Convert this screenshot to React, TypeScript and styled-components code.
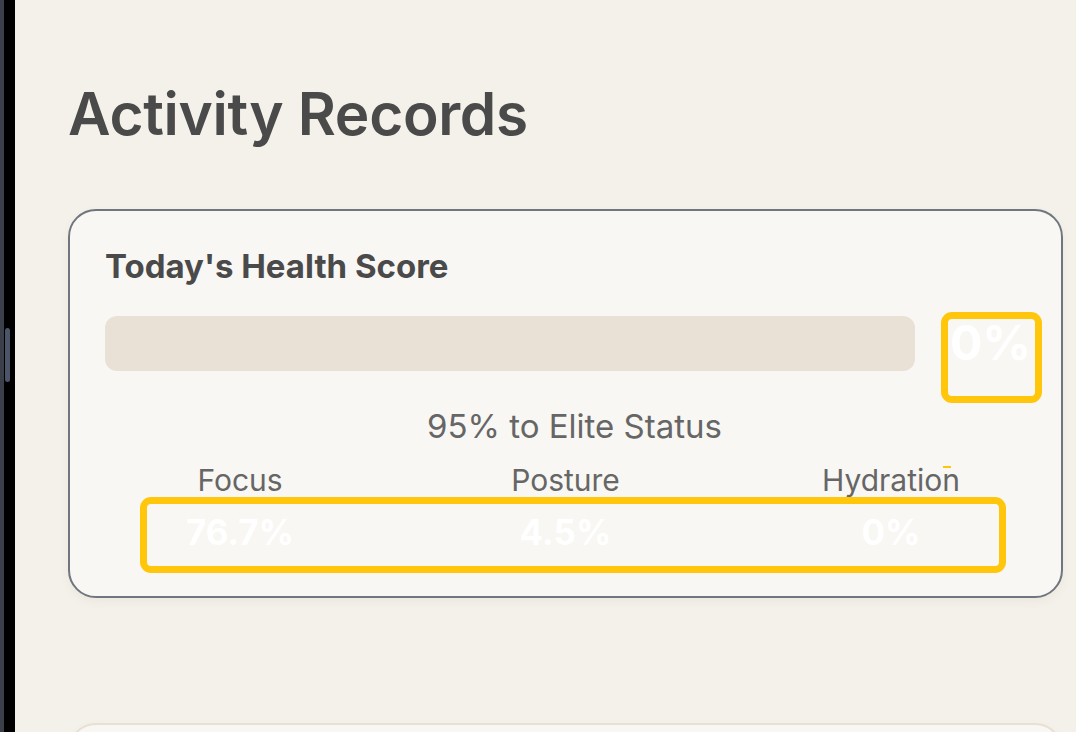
import React from "react";
import styled, { createGlobalStyle } from "styled-components";

const GlobalStyle = createGlobalStyle`
  html, body {
    margin: 0;
    padding: 0;
    background: #f4f1ea;
    font-family: Inter, "Noto Sans", "Liberation Sans", sans-serif;
    overflow: hidden;
  }
`;

const Screen = styled.div`
  display: flex;
  height: 732px;
  overflow: hidden;
`;

const SideStrip = styled.div`
  position: relative;
  width: 11px;
  flex-shrink: 0;
  background: #000;
  border-left: 4px solid #3b3f49;
`;

const DragHandle = styled.span`
  position: absolute;
  left: 1px;
  top: 328px;
  width: 5px;
  height: 54px;
  border-radius: 3px;
  background: #4c5568;
`;

const Main = styled.main`
  flex: 1;
  padding: 79px 13px 0 53px;
  display: flex;
  flex-direction: column;
`;

const Title = styled.h1`
  margin: 0 0 60px;
  font-size: 58.5px;
  line-height: 70px;
  font-weight: 600;
  color: #4a4a4a;
  letter-spacing: -0.3px;
`;

const Card = styled.section<{ $active?: boolean }>`
  position: relative;
  flex-shrink: 0;
  background: #f9f7f3;
  border: 2px solid ${(p) => (p.$active ? "#70767f" : "#e8e0d4")};
  border-radius: 28px;
  padding: 36px 35px 43px;
  min-height: 120px;
  box-shadow: 0 4px 10px rgba(120, 100, 70, 0.06);
  & + & {
    margin-top: 125px;
  }
`;

const CardTitle = styled.h2`
  margin: 0;
  font-size: 33px;
  line-height: 39px;
  font-weight: 700;
  color: #4a4a4a;
`;

const ProgressRow = styled.div`
  display: flex;
  align-items: center;
  gap: 35px;
  margin: 28px -5px 0 0;
`;

const Track = styled.div`
  flex: 1;
  height: 55px;
  border-radius: 12px;
  background: #e9e1d5;
  overflow: hidden;
`;

const Fill = styled.div`
  height: 100%;
  background: #c9b89c;
`;

const Score = styled.span`
  font-size: 48px;
  line-height: 58px;
  font-weight: 700;
  color: #ffffff;
`;

const Status = styled.p`
  margin: 34px 0 0;
  padding-left: 18px;
  text-align: center;
  font-size: 33px;
  line-height: 40px;
  color: #666666;
`;

const Stats = styled.div`
  display: grid;
  grid-template-columns: repeat(3, 270px);
  justify-content: space-between;
  margin-top: 16px;
`;

const Stat = styled.div`
  display: flex;
  flex-direction: column;
  align-items: center;
`;

const StatLabel = styled.span`
  font-size: 30px;
  line-height: 36px;
  color: #666666;
`;

const StatValue = styled.span`
  margin-top: 13px;
  font-size: 35px;
  line-height: 42px;
  font-weight: 700;
  color: #ffffff;
`;

const Highlight = styled.div`
  position: absolute;
  border: 7px solid #ffc60b;
  border-radius: 11px;
  pointer-events: none;
`;

const Tick = styled.div`
  position: absolute;
  height: 2px;
  background: #ffc60b;
  pointer-events: none;
`;

const stats = [
  { label: "Focus", value: "76.7%" },
  { label: "Posture", value: "4.5%" },
  { label: "Hydration", value: "0%" },
];

const score = 0;

export default function App() {
  return (
    <>
      <GlobalStyle />
      <Screen>
        <SideStrip>
          <DragHandle />
        </SideStrip>
        <Main>
          <Title>Activity Records</Title>
          <Card $active>
            <CardTitle>Today's Health Score</CardTitle>
            <ProgressRow>
              <Track>
                <Fill style={{ width: `${score}%` }} />
              </Track>
              <Score>{score}%</Score>
            </ProgressRow>
            <Status>95% to Elite Status</Status>
            <Stats>
              {stats.map((s) => (
                <Stat key={s.label}>
                  <StatLabel>{s.label}</StatLabel>
                  <StatValue>{s.value}</StatValue>
                </Stat>
              ))}
            </Stats>
            <Highlight style={{ left: 871, top: 101, width: 87, height: 77 }} />
            <Highlight style={{ left: 70, top: 286, width: 852, height: 62 }} />
            <Tick style={{ left: 873, top: 255, width: 8 }} />
          </Card>
          <Card />
        </Main>
      </Screen>
    </>
  );
}
